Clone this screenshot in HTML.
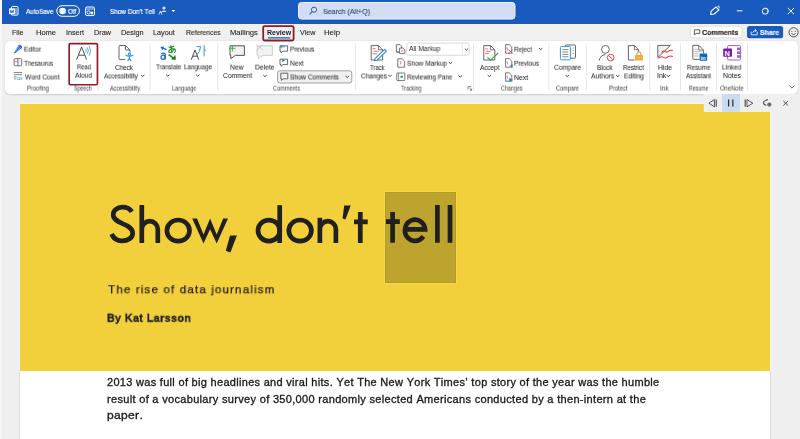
<!DOCTYPE html>
<html><head><meta charset="utf-8">
<style>
*{margin:0;padding:0;box-sizing:border-box}
html,body{width:800px;height:439px;overflow:hidden;background:#efefef;font-family:"Liberation Sans",sans-serif;color:#262626}
.t{position:absolute;white-space:nowrap;line-height:1;font-kerning:none;transform-origin:0 0;will-change:transform}
.b{position:absolute}
svg{position:absolute;overflow:visible}
#title{position:absolute;left:2px;top:0;width:798px;height:24px;background:#185abd}
#lstrip{position:absolute;left:0;top:0;width:2px;height:439px;background:#f7f7f7}
#ribbonbg{position:absolute;left:2px;top:24px;width:798px;height:70px;background:#f0f0f0}
#panel{position:absolute;left:5px;top:41px;width:793px;height:53px;background:#fff;border-radius:5px;box-shadow:0 0.6px 1.6px rgba(0,0,0,.14)}
#docbg{position:absolute;left:2px;top:94px;width:798px;height:345px;background:#efefef}
#page{position:absolute;left:20px;top:104px;width:750px;height:335px;background:#fff}
#yellow{position:absolute;left:20px;top:104px;width:750px;height:267px;background:#f2d03c}
</style></head><body>
<div id="lstrip"></div>
<div id="title"></div>
<div id="ribbonbg"></div>
<div id="docbg"></div>
<div class="b" style="left:19px;top:102px;width:752px;height:269px;background:#f1f3fb"></div>
<div class="b" style="left:19px;top:371px;width:1px;height:68px;background:#dcdcdc"></div>
<div class="b" style="left:770px;top:371px;width:1px;height:68px;background:#dcdcdc"></div>
<div id="page"></div>
<div id="yellow"></div>
<div id="panel"></div>
<div class="b" style="left:384.3px;top:191px;width:73px;height:93px;background:#f6d842"></div>
<div class="b" style="left:385.3px;top:192px;width:71px;height:91px;background:#bda42f;box-shadow:inset 0 0 0 0.8px #b19829"></div>
<svg width="800" height="439" viewBox="0 0 800 439" style="left:0;top:0">
<!-- ===== title bar ===== -->
<!-- word icon -->
<rect x="11.5" y="6.5" width="6.5" height="8.6" rx="1" fill="none" stroke="#fff" stroke-width="1"/>
<line x1="15" y1="9" x2="17" y2="9" stroke="#fff" stroke-width="0.8"/>
<line x1="15" y1="11" x2="17" y2="11" stroke="#fff" stroke-width="0.8"/>
<line x1="15" y1="13" x2="17" y2="13" stroke="#fff" stroke-width="0.8"/>
<rect x="9" y="8.2" width="6" height="6" rx="1" fill="#fff"/>
<path d="M10.2 9.8 L11.1 12.8 L12 10.6 L12.9 12.8 L13.8 9.8" fill="none" stroke="#185abd" stroke-width="0.9"/>
<!-- toggle -->
<rect x="56.8" y="5.7" width="22.6" height="10.6" rx="5.3" fill="none" stroke="#fff" stroke-width="1"/>
<circle cx="62.6" cy="11" r="3.3" fill="#fff"/>
<!-- save/sync icon -->
<rect x="85.5" y="7" width="9" height="8.6" rx="1.5" fill="none" stroke="#fff" stroke-width="1"/>
<line x1="85.5" y1="9" x2="94.5" y2="9" stroke="#fff" stroke-width="0.8"/>
<circle cx="88.6" cy="12.4" r="1.6" fill="none" stroke="#fff" stroke-width="0.9"/>
<circle cx="91.8" cy="13" r="1.4" fill="#fff"/>
<!-- person icon + caret -->
<circle cx="164" cy="8" r="1.6" fill="#dfe7f6"/>
<path d="M161.8 11.5 Q164 9.5 166.2 11.5 L166.2 12 L161.8 12 Z" fill="#dfe7f6"/>
<path d="M159 14.5 L160.5 11 L162 14.5 M159.4 12.3 L161.6 12.3" fill="none" stroke="#dfe7f6" stroke-width="0.9"/>
<path d="M171.4 9.9 L175.3 9.9 L173.35 12 Z" fill="#fff"/>
<!-- search box -->
<rect x="298.5" y="2.5" width="216.5" height="16.6" rx="3" fill="#d3ddf1" stroke="#eef2fa" stroke-width="1"/>
<circle cx="314" cy="9.7" r="2.6" fill="none" stroke="#3a5a93" stroke-width="1"/>
<line x1="312.2" y1="11.6" x2="309.6" y2="14.3" stroke="#3a5a93" stroke-width="1.1"/>
<!-- pen icon -->
<path d="M710.6 14.4 L711.2 11.2 L716 7 L719 9.8 L714.2 14 Z" fill="none" stroke="#fff" stroke-width="1.1" stroke-linejoin="round"/><path d="M717.4 6.6 L718.8 5.8 L719.4 8.2" fill="none" stroke="#fff" stroke-width="0.8"/>
<!-- minimize -->
<line x1="736.9" y1="10.8" x2="742.5" y2="10.8" stroke="#fff" stroke-width="1"/>
<!-- restore -->
<rect x="762.5" y="8.6" width="5.4" height="5.4" rx="2" fill="none" stroke="#fff" stroke-width="1"/><path d="M764.2 8 Q768.6 7.6 768.6 12.2" fill="none" stroke="#fff" stroke-width="0.6"/>
<!-- close -->
<path d="M787.8 8 L794 14.2 M794 8 L787.8 14.2" stroke="#fff" stroke-width="1"/>

<!-- ===== tabs row ===== -->
<rect x="263.2" y="26.1" width="30.4" height="14.4" rx="1.5" fill="none" stroke="#8d1c27" stroke-width="1.8"/>
<line x1="268.4" y1="37.9" x2="289.8" y2="37.9" stroke="#185abd" stroke-width="1.2" stroke-linecap="round"/>
<!-- comments button -->
<rect x="690.5" y="26.3" width="51.6" height="11.6" rx="2.5" fill="#fff" stroke="#dcdcdc" stroke-width="0.8"/>
<path d="M694.4 29.8 h5.4 v3.6 h-3.6 l-1.8 1.5 Z" fill="none" stroke="#333" stroke-width="0.8"/>
<!-- share button -->
<rect x="747" y="26" width="36.1" height="12.2" rx="2.5" fill="#185abd"/>
<path d="M751.2 31.6 v3.2 h6 v-3.2 M752.6 32.8 q0.8 -2.4 3.4 -2.4 M754.8 29.2 l1.6 1.3 l-1.6 1.3" fill="none" stroke="#fff" stroke-width="0.8"/>
<!-- smiley -->
<circle cx="793.6" cy="32.3" r="4.6" fill="none" stroke="#333" stroke-width="0.85"/>
<circle cx="791.9" cy="31.2" r="0.55" fill="#333"/>
<circle cx="795.3" cy="31.2" r="0.55" fill="#333"/>
<path d="M791.4 33.6 q2.2 1.9 4.4 0" fill="none" stroke="#333" stroke-width="0.8"/>

<!-- ===== ribbon ===== -->
<!-- separators -->
<g fill="#e0e0e0">
<rect x="67.8" y="43.5" width="0.8" height="47.2"/>
<rect x="97.8" y="43.5" width="0.8" height="47.2"/>
<rect x="149.6" y="43.5" width="0.8" height="47.2"/>
<rect x="217.4" y="43.5" width="0.8" height="47.2"/>
<rect x="355.3" y="43.5" width="0.8" height="47.2"/>
<rect x="473.2" y="43.5" width="0.8" height="47.2"/>
<rect x="548.5" y="43.5" width="0.8" height="47.2"/>
<rect x="585.8" y="43.5" width="0.8" height="47.2"/>
<rect x="649.4" y="43.5" width="0.8" height="47.2"/>
<rect x="680.2" y="43.5" width="0.8" height="47.2"/>
<rect x="716.2" y="43.5" width="0.8" height="47.2"/>
<rect x="747.2" y="43.5" width="0.8" height="47.2"/>
</g>
<!-- editor pen -->
<path d="M13.9 52.9 L18.4 45.6 Q19.4 44.2 20.5 45.1 L21.9 46.5 Q22.5 47.5 21.6 48.3 L14.9 53.2 Z" fill="#2c62d6"/>
<path d="M15.3 51.4 L19.2 45.9 M17.2 51.6 L20.6 47.2" stroke="#fff" stroke-width="0.45"/>
<!-- thesaurus book -->
<rect x="14.1" y="58.6" width="7.6" height="7.2" rx="1" fill="#f4f4f4" stroke="#555" stroke-width="0.8"/>
<line x1="17.9" y1="58.6" x2="17.9" y2="65.8" stroke="#555" stroke-width="0.8"/>
<line x1="14.8" y1="61.6" x2="17.2" y2="61.6" stroke="#e0505a" stroke-width="0.7"/>
<!-- word count -->
<g stroke="#555" stroke-width="0.7">
<line x1="13.8" y1="72.5" x2="22" y2="72.5"/>
<line x1="13.8" y1="74.6" x2="22" y2="74.6"/>
<line x1="13.8" y1="76.7" x2="16.5" y2="76.7"/>
<line x1="13.8" y1="78.8" x2="16.5" y2="78.8"/>
</g>
<text x="16.8" y="80.3" font-family="Liberation Sans" font-size="4.2" font-weight="700" fill="#2a8ee0" textLength="5.2" lengthAdjust="spacingAndGlyphs">123</text>
<!-- read aloud -->
<path d="M76.6 59.6 L81.6 47 L86.6 59.6 M78.6 55.2 L84.6 55.2" fill="none" stroke="#3a3a3a" stroke-width="0.9"/>
<g fill="none" stroke="#3a9be0" stroke-width="0.9">
<path d="M85.6 48.8 Q86.9 50.6 85.6 52.4"/>
<path d="M87.3 47.4 Q89.5 50.6 87.3 53.8"/>
<path d="M89.2 45.8 Q92.2 50.6 89.2 55.6"/>
</g>
<rect x="69.2" y="43.6" width="28.2" height="41.1" rx="1.2" fill="none" stroke="#8d1c27" stroke-width="1.6"/>
<!-- check accessibility -->
<path d="M125.6 45.5 L119.8 45.5 Q119 45.5 119 46.3 L119 58.7 Q119 59.5 119.8 59.5 L126 59.5 M130 50 L130 52.2 M125.6 45.5 L130 50" fill="#fff" stroke="#555" stroke-width="0.9"/>
<path d="M125.4 45.6 L125.4 49 Q125.4 50 126.4 50 L130 50" fill="none" stroke="#333" stroke-width="0.8"/>
<rect x="125" y="52.4" width="9" height="9" fill="#fff"/>
<g fill="none" stroke="#3e9ae0" stroke-width="1.2" stroke-linecap="round">
<circle cx="129.4" cy="54" r="1.1"/>
<path d="M125.9 55.4 Q129.4 56.8 132.9 55.4"/>
<path d="M129.4 56.2 V58.4 L127.9 60.6 M129.4 58.4 L130.9 60.6"/>
</g>
<path d="M141.05 74.90 L142.75 76.40 L144.45 74.90" fill="none" stroke="#333" stroke-width="0.9"/>
<!-- translate -->
<g fill="none" stroke="#1a6bd0" stroke-width="1.3">
<ellipse cx="163.1" cy="57.2" rx="2" ry="2.1"/>
<path d="M161 53.7 Q163.4 52.3 165.2 53.9 L165.2 59.6"/>
<path d="M166.6 49.6 L162.4 47.8"/>
</g>
<path d="M160.4 47 L164.2 46.6 L162.6 50.2 Z" fill="#1a6bd0"/>
<g fill="none" stroke="#1f8a2e" stroke-width="1.1">
<path d="M168.6 47.3 Q171.4 47.2 174 46.4"/>
<path d="M170.8 45.2 Q171 49.6 172.2 53"/>
<path d="M173.4 48.6 Q169 49.2 168.8 51.6 Q169 53.2 171 52.2 Q173.8 50.4 174.2 48.8 Q176.6 50.4 174.2 53"/>
</g>
<path d="M168.6 54.6 L173.6 58.2" stroke="#107c10" stroke-width="1.4"/>
<path d="M175.8 59.8 L171 59.4 L175.4 55 Z" fill="#107c10"/>
<path d="M166.10 74.70 L167.80 76.20 L169.50 74.70" fill="none" stroke="#333" stroke-width="0.9"/>
<!-- language -->
<path d="M191.2 59.8 L195 50 L198.8 59.8 M192.7 56.2 L197.3 56.2" fill="none" stroke="#3a3a3a" stroke-width="0.9"/>
<path d="M196.6 46.6 L200.6 46.6 Q200.4 52 196.2 55.4 M204.1 45.2 L204.1 56.4 M204.1 50.2 L206 50.2" fill="none" stroke="#3a96dd" stroke-width="1"/>
<path d="M196.10 74.70 L197.80 76.20 L199.50 74.70" fill="none" stroke="#333" stroke-width="0.9"/>
<!-- new comment -->
<path d="M230 45.8 L244.4 45.8 L244.4 55.4 L235.4 55.4 L230.8 58.6 L230.8 55.4 L230 55.4 Z" fill="#f1f1f1" stroke="#444" stroke-width="0.9" stroke-linejoin="round"/>
<path d="M232.4 45.2 L232.4 51.4 M229.3 48.3 L235.5 48.3" stroke="#3cb44a" stroke-width="1"/>
<!-- delete -->
<path d="M257.2 45.8 L272.4 45.8 L272.4 55.4 L263 55.4 L258.4 58.6 L258.4 55.4 L257.2 55.4 Z" fill="#f3f3f3" stroke="#c8c8c8" stroke-width="0.9" stroke-linejoin="round"/>
<path d="M256.4 44.2 L263.4 50.6 M263.4 44.2 L256.4 50.6" stroke="#c0c0c0" stroke-width="0.8"/>
<path d="M263.30 75.10 L265.00 76.60 L266.70 75.10" fill="none" stroke="#333" stroke-width="0.9"/>
<!-- previous / next comment -->
<path d="M280 45.8 L287.6 45.8 L287.6 51.2 L283 51.2 L281 52.8 L281 51.2 L280 51.2 Z" fill="none" stroke="#444" stroke-width="0.8"/>
<path d="M284.6 46.8 L280.4 46.8 M281.8 45.6 L280.4 46.8 L281.8 48" fill="none" stroke="#2b88d8" stroke-width="0.9"/>
<path d="M280 59.2 L287.6 59.2 L287.6 64.6 L283 64.6 L281 66.2 L281 64.6 L280 64.6 Z" fill="none" stroke="#444" stroke-width="0.8"/>
<path d="M282.2 58.4 L282.2 62.2 L285 60.3 Z" fill="#2b88d8"/>
<!-- show comments button -->
<rect x="277.6" y="70.8" width="74.2" height="12.2" rx="2.4" fill="#f0f0f0" stroke="#8a8a8a" stroke-width="0.8"/>
<path d="M280.8 73.2 L287.8 73.2 L287.8 78.8 L283.2 78.8 L281.6 80.4 L281.6 78.8 L280.8 78.8 Z" fill="none" stroke="#444" stroke-width="0.8"/>
<path d="M345.50 76.00 L347.20 77.50 L348.90 76.00" fill="none" stroke="#333" stroke-width="0.9"/>
<!-- track changes -->
<path d="M371.2 45.6 L378.4 45.6 L382.6 49.8 L382.6 60 L371.2 60 Z" fill="#fff" stroke="#555" stroke-width="0.9" stroke-linejoin="round"/>
<path d="M378.4 45.6 L378.4 49.8 L382.6 49.8" fill="none" stroke="#555" stroke-width="0.8"/>
<g stroke="#e8484f" stroke-width="0.8"><line x1="372.6" y1="48.6" x2="375.4" y2="48.6"/><line x1="373.6" y1="51.2" x2="378.6" y2="51.2"/><line x1="372.6" y1="53.8" x2="377.2" y2="53.8"/></g>
<path d="M374.6 60.8 L375.2 58.4 L384.6 49.4 L386.4 51.2 L377 60.2 Z" fill="#fff" stroke="#2b88d8" stroke-width="1.1" stroke-linejoin="round"/>
<path d="M388.30 75.00 L390.00 76.50 L391.70 75.00" fill="none" stroke="#333" stroke-width="0.9"/>
<!-- all markup icon -->
<path d="M396.4 44.6 L400 44.6 L401.6 46.2 L401.6 52 L396.4 52 Z" fill="#fff" stroke="#555" stroke-width="0.8"/>
<path d="M399.6 48 L403 48 L404.8 49.8 L404.8 53.6 L399.6 53.6 Z" fill="#fff" stroke="#555" stroke-width="0.8"/>
<line x1="396.8" y1="52.4" x2="399.4" y2="52.4" stroke="#2b88d8" stroke-width="1.1"/>
<line x1="401" y1="51" x2="403.4" y2="51" stroke="#e8484f" stroke-width="0.8"/>
<!-- all markup dropdown -->
<rect x="406.6" y="43.1" width="62.6" height="12.2" rx="2" fill="#fff" stroke="#d2d2d2" stroke-width="0.8"/>
<line x1="462.3" y1="43.4" x2="462.3" y2="55" stroke="#e3e3e3" stroke-width="0.8"/>
<path d="M464.9 48.7 L466.4 50.1 L467.9 48.7" fill="none" stroke="#333" stroke-width="0.9"/>
<!-- show markup -->
<path d="M397.8 58.8 L402.2 58.8 L404.6 61.2 L404.6 67.2 L397.8 67.2 Z" fill="#fff" stroke="#555" stroke-width="0.8" stroke-linejoin="round"/>
<line x1="400.8" y1="61.2" x2="400.8" y2="64.6" stroke="#e8484f" stroke-width="0.8"/>
<path d="M448.80 62.10 L450.50 63.60 L452.20 62.10" fill="none" stroke="#333" stroke-width="0.9"/>
<!-- reviewing pane -->
<rect x="396.8" y="73" width="8" height="7.6" rx="0.8" fill="#fff" stroke="#555" stroke-width="0.8"/>
<line x1="398.6" y1="73" x2="398.6" y2="80.6" stroke="#555" stroke-width="0.6"/>
<rect x="400.4" y="75.8" width="2.4" height="2" fill="#2b88d8"/>
<path d="M458.50 75.70 L460.20 77.20 L461.90 75.70" fill="none" stroke="#333" stroke-width="0.9"/>
<!-- tracking launcher -->
<path d="M468 86.6 L471.2 86.6 M468 86.6 L468 89.6 M469.4 88 L471.6 90.2 M471.6 88.6 L471.6 90.2 L470 90.2" fill="none" stroke="#555" stroke-width="0.7"/>
<!-- accept -->
<path d="M483.8 45.6 L490.6 45.6 L494.8 49.8 L494.8 60 L483.8 60 Z" fill="#fff" stroke="#555" stroke-width="0.9" stroke-linejoin="round"/>
<path d="M490.6 45.6 L490.6 49.8 L494.8 49.8" fill="none" stroke="#555" stroke-width="0.8"/>
<g stroke="#e8484f" stroke-width="0.8"><line x1="485.2" y1="49" x2="488" y2="49"/><line x1="486" y1="51.4" x2="490.6" y2="51.4"/><line x1="485.2" y1="53.6" x2="489" y2="53.6"/></g>
<path d="M487.4 57 L490.4 60.4 L498.2 53" fill="none" stroke="#3aa845" stroke-width="1.1"/>
<path d="M487.70 75.10 L489.40 76.60 L491.10 75.10" fill="none" stroke="#333" stroke-width="0.9"/>
<!-- reject/prev/next change -->
<g fill="#fff" stroke="#555" stroke-width="0.8" stroke-linejoin="round">
<path d="M505.6 44.6 L509.2 44.6 L511.8 47.2 L511.8 53.2 L505.6 53.2 Z"/>
<path d="M505.6 58.6 L509.2 58.6 L511.8 61.2 L511.8 67.2 L505.6 67.2 Z"/>
<path d="M505.6 72.8 L509.2 72.8 L511.8 75.4 L511.8 81.2 L505.6 81.2 Z"/>
</g>
<g stroke="#e8484f" stroke-width="0.7"><line x1="507" y1="47.4" x2="507.6" y2="50.4"/><line x1="507" y1="61.4" x2="507.6" y2="64.4"/><line x1="507" y1="75.6" x2="507.6" y2="78.6"/></g>
<path d="M508.6 49.6 L512.6 53.6 M512.6 49.6 L508.6 53.6" stroke="#e8484f" stroke-width="0.9"/>
<path d="M512.6 64 L509.6 66 L512.6 68 Z" fill="#2b88d8"/>
<path d="M509.2 77.8 L513 80 L509.2 82 Z" fill="#2b88d8"/>
<path d="M538.90 48.10 L540.60 49.60 L542.30 48.10" fill="none" stroke="#333" stroke-width="0.9"/>
<!-- compare -->
<rect x="565.3" y="45" width="10.2" height="13.2" rx="0.8" fill="#fff" stroke="#555" stroke-width="0.9"/>
<g stroke="#555" stroke-width="0.6"><line x1="572.6" y1="48" x2="574" y2="48"/><line x1="572.6" y1="50.6" x2="574" y2="50.6"/><line x1="572.6" y1="53.2" x2="574" y2="53.2"/></g>
<rect x="560.4" y="46.4" width="10" height="13.4" rx="1" fill="#fff" stroke="#3a96dd" stroke-width="1"/>
<g stroke="#555" stroke-width="0.7"><line x1="562.4" y1="49.6" x2="568.4" y2="49.6"/><line x1="562.4" y1="52" x2="568.4" y2="52"/><line x1="562.4" y1="54.4" x2="568.4" y2="54.4"/><line x1="562.4" y1="56.8" x2="568.4" y2="56.8"/></g>
<path d="M565.50 75.10 L567.20 76.60 L568.90 75.10" fill="none" stroke="#333" stroke-width="0.9"/>
<!-- block authors -->
<circle cx="605.4" cy="49.4" r="3.9" fill="none" stroke="#555" stroke-width="0.9"/>
<path d="M599.2 60.6 Q600.2 55 605.4 54.6" fill="none" stroke="#555" stroke-width="0.9"/>
<circle cx="610.7" cy="57.6" r="3.4" fill="#fff" stroke="#e8484f" stroke-width="1"/>
<line x1="608.4" y1="55.3" x2="613" y2="59.9" stroke="#e8484f" stroke-width="1"/>
<path d="M616.10 75.10 L617.80 76.60 L619.50 75.10" fill="none" stroke="#333" stroke-width="0.9"/>
<!-- restrict editing -->
<path d="M628.4 45.6 L634.4 45.6 L638.4 49.6 L638.4 52 M634.6 60 L628.4 60 L628.4 45.6" fill="#fff" stroke="#555" stroke-width="0.9" stroke-linejoin="round"/>
<path d="M634.4 45.6 L634.4 49.6 L638.4 49.6" fill="none" stroke="#555" stroke-width="0.8"/>
<path d="M637 55 L637 53.4 Q637 51.8 638.9 51.8 Q640.8 51.8 640.8 53.4 L640.8 55" fill="none" stroke="#d98a1f" stroke-width="0.9"/>
<rect x="635" y="55" width="8" height="5.6" rx="0.6" fill="#f2a93b"/>
<line x1="635.4" y1="57.4" x2="642.6" y2="57.4" stroke="#fbd28a" stroke-width="0.5"/>
<!-- hide ink -->
<path d="M657.8 57.6 L657.8 45.4 L670.4 45.4 Z" fill="#f1f1f1"/>
<path d="M657.8 57.6 L657.8 45.4 L670.4 45.4 L657.8 57.6" fill="none" stroke="#555" stroke-width="0.9"/>
<path d="M661.6 52.8 Q663.2 50 665.2 51.6 Q667 53 668.8 51 Q670.4 49.8 672.8 50.4" fill="none" stroke="#e23b3b" stroke-width="1.1"/>
<path d="M658.4 58.4 Q661.2 55.6 663.6 57.4 Q665.8 58.8 668 56.6 Q670 55.4 672.8 56.4" fill="none" stroke="#e23b3b" stroke-width="1.1"/>
<path d="M666.70 75.10 L668.40 76.60 L670.10 75.10" fill="none" stroke="#333" stroke-width="0.9"/>
<!-- resume assistant -->
<path d="M692.8 45.4 L698.8 45.4 L703.4 50 L703.4 53.4 M699.4 59.4 L693.6 59.4 Q692.8 59.4 692.8 58.6 L692.8 45.4" fill="#fff" stroke="#555" stroke-width="0.9" stroke-linejoin="round"/>
<path d="M698.8 45.4 L698.8 50 L703.4 50" fill="none" stroke="#555" stroke-width="0.8"/>
<g stroke="#888" stroke-width="0.6"><line x1="694.4" y1="49.4" x2="697.6" y2="49.4"/><line x1="694.4" y1="51.6" x2="701.6" y2="51.6"/><line x1="694.4" y1="53.8" x2="698.6" y2="53.8"/><line x1="694.4" y1="56" x2="698.6" y2="56"/></g>
<rect x="699.6" y="53.6" width="7.6" height="7.2" rx="0.8" fill="#0a66c2"/>
<text x="700.7" y="59.9" font-family="Liberation Sans" font-size="5.6" font-weight="700" fill="#fff">in</text>
<!-- onenote -->
<rect x="727.6" y="45.6" width="13" height="14.4" rx="1.2" fill="#fff" stroke="#a35ad6" stroke-width="1"/>
<g fill="#a35ad6"><rect x="737" y="47.6" width="3.6" height="2.6"/><rect x="737" y="51.4" width="3.6" height="2.6"/><rect x="737" y="55.2" width="3.6" height="2.6"/></g>
<rect x="723.2" y="48.6" width="8.8" height="8.2" rx="0.8" fill="#7719aa"/>
<text x="724.5" y="55.5" font-family="Liberation Sans" font-size="7.4" font-weight="700" fill="#fff">N</text>
<!-- collapse chevron -->
<path d="M789.4 85.6 L791.9 88 L794.4 85.6" fill="none" stroke="#444" stroke-width="0.8"/>

<!-- ===== read aloud toolbar ===== -->
<rect x="703.8" y="94" width="96.2" height="18" fill="#efefef"/>
<rect x="722" y="94" width="18" height="17.8" fill="#ccdcf0"/>
<path d="M714.4 99.6 L708.9 103.2 L714.4 106.8 Z" fill="none" stroke="#444" stroke-width="0.9" stroke-linejoin="round"/>
<path d="M716.2 99.6 L716.2 106.8" stroke="#444" stroke-width="1.1"/>
<path d="M728.6 99.6 L728.6 106.6 M732.8 99.6 L732.8 106.6" stroke="#333" stroke-width="1.3"/>
<path d="M745.2 99.6 L745.2 106.8" stroke="#444" stroke-width="1.1"/>
<path d="M747 99.6 L752.8 103.2 L747 106.8 Z" fill="none" stroke="#444" stroke-width="0.9" stroke-linejoin="round"/>
<path d="M766.6 100.2 Q763.4 100.8 763.5 102.9 Q763.6 104.9 766.4 105.2" fill="none" stroke="#555" stroke-width="1.1"/><circle cx="767" cy="99.7" r="0.8" fill="#333"/>
<circle cx="769.3" cy="104.6" r="2.1" fill="#6a6a6a"/>
<path d="M783.3 100.9 L788 105.5 M788 100.9 L783.3 105.5" stroke="#3a3a3a" stroke-width="0.9"/>
</svg>
<svg width="800" height="439" viewBox="0 0 800 439" style="left:0;top:0">
<defs><clipPath id="wclip"><rect x="150" y="218.4" width="90" height="25.1"/></clipPath></defs>
<g fill="none" stroke="#202020" stroke-width="4.7" stroke-linecap="butt">
<!-- S -->
<path d="M131.8 211.8 C130 208.8 126.4 207.2 122.4 207.2 C117.2 207.2 113.2 210.4 113.2 214.6 C113.2 219.6 118 221.6 122.5 223.6 C127.8 225.8 132.7 228 132.7 233.2 C132.7 237.8 128 240.9 122 240.9 C117.2 240.9 113.4 238.2 111.6 234"/>
<!-- h -->
<path d="M141.8 243 V205 M141.8 229.2 A8 8 0 0 1 157.8 229.2 V243"/>
<!-- o -->
<ellipse cx="178.2" cy="230.6" rx="11.3" ry="10.6"/>
<!-- w -->

<!-- d -->
<ellipse cx="268.9" cy="230.6" rx="10.9" ry="10.5"/>
<path d="M279.7 243 V205.2"/>
<!-- o -->
<ellipse cx="300.1" cy="230.6" rx="11.3" ry="10.6"/>
<!-- n -->
<path d="M319.9 243 V217.8 M319.9 229.2 A8 8 0 0 1 335.9 229.2 V243"/>
<!-- t -->
<path d="M360.3 212 V243 M354 221.8 H367.7"/>
<!-- t -->
<path d="M392.6 212 V242.8 M386 221.6 H399.8"/>
<!-- e -->
<path d="M404.9 229.4 H425.1 A10.1 10.6 0 1 0 423.3 236.4"/>
<!-- l l -->
<path d="M437.4 205 V242.8 M450 205 V242.8"/>
</g>
<g fill="#202020">
<path d="M192.2 218.6 L197 218.6 L203.5 234.4 L210.1 218.6 L216.7 234.4 L223.2 218.6 L228 218.6 L216.7 243.4 L210.1 229.2 L203.5 243.4 Z"/>
<path d="M230 235.4 L236.9 235.4 L230.4 252.4 L225.8 250.8 Z"/>
<path d="M344.2 205.6 L350.8 205.6 L345.4 219.4 L342.6 218.6 Z"/>
</g>
</svg>

<span class="t" style="left:26.39px;top:8px;font-size:6.9px;color:#ffffff;transform:translateY(0.90px) scaleX(0.9223);-webkit-text-stroke:0.2px #fff;">AutoSave</span>
<span class="t" style="left:67.71px;top:8px;font-size:6.9px;color:#ffffff;transform:translateY(0.90px) scaleX(0.9005);-webkit-text-stroke:0.2px #fff;">Off</span>
<span class="t" style="left:110.11px;top:8px;font-size:7.2px;color:#ffffff;transform:scaleX(0.8909);-webkit-text-stroke:0.2px #fff;">Show Don’t Tell</span>
<span class="t" style="left:323.38px;top:8px;font-size:7.6px;color:#2d4d88;transform:scaleX(0.9324);-webkit-text-stroke:0.15px #2d4d88;">Search (Alt+Q)</span>
<span class="t" style="left:11.81px;top:29px;font-size:7.0px;color:#1c1c1c;transform:scaleX(1.0198);-webkit-text-stroke:0.08px #1c1c1c;">File</span>
<span class="t" style="left:36.28px;top:29px;font-size:7.0px;color:#1c1c1c;transform:scaleX(1.0738);-webkit-text-stroke:0.08px #1c1c1c;">Home</span>
<span class="t" style="left:66.24px;top:29px;font-size:7.0px;color:#1c1c1c;transform:scaleX(1.0292);-webkit-text-stroke:0.08px #1c1c1c;">Insert</span>
<span class="t" style="left:94.20px;top:29px;font-size:7.0px;color:#1c1c1c;transform:scaleX(1.0458);-webkit-text-stroke:0.08px #1c1c1c;">Draw</span>
<span class="t" style="left:121.00px;top:29px;font-size:7.0px;color:#1c1c1c;transform:scaleX(1.0404);-webkit-text-stroke:0.08px #1c1c1c;">Design</span>
<span class="t" style="left:153.20px;top:29px;font-size:7.0px;color:#1c1c1c;transform:scaleX(1.0396);-webkit-text-stroke:0.08px #1c1c1c;">Layout</span>
<span class="t" style="left:185.64px;top:29px;font-size:7.0px;color:#1c1c1c;transform:scaleX(0.9666);-webkit-text-stroke:0.08px #1c1c1c;">References</span>
<span class="t" style="left:229.78px;top:29px;font-size:7.0px;color:#1c1c1c;transform:scaleX(1.0866);-webkit-text-stroke:0.08px #1c1c1c;">Mailings</span>
<span class="t" style="left:299.97px;top:29px;font-size:7.0px;color:#1c1c1c;transform:scaleX(1.0093);-webkit-text-stroke:0.08px #1c1c1c;">View</span>
<span class="t" style="left:324.36px;top:29px;font-size:7.0px;color:#1c1c1c;transform:scaleX(1.1088);-webkit-text-stroke:0.08px #1c1c1c;">Help</span>
<span class="t" style="left:266.84px;top:29px;font-size:7.0px;font-weight:700;color:#1c1c1c;transform:scaleX(0.9886);">Review</span>
<span class="t" style="left:701.91px;top:28px;font-size:7.2px;font-weight:700;color:#141414;transform:translateY(0.90px) scaleX(0.9750);-webkit-text-stroke:0.12px #141414;">Comments</span>
<span class="t" style="left:759.50px;top:28px;font-size:7.2px;font-weight:700;color:#ffffff;transform:translateY(0.90px) scaleX(0.9562);-webkit-text-stroke:0.12px #fff;">Share</span>
<span class="t" style="left:24.06px;top:46px;font-size:6.8px;color:#1f1f1f;transform:translateY(0.60px) scaleX(0.9595);-webkit-text-stroke:0.04px #262626;">Editor</span>
<span class="t" style="left:24.46px;top:60px;font-size:6.8px;color:#1f1f1f;transform:translateY(0.70px) scaleX(0.9045);-webkit-text-stroke:0.04px #262626;">Thesaurus</span>
<span class="t" style="left:24.57px;top:74px;font-size:6.8px;color:#1f1f1f;transform:translateY(0.50px) scaleX(0.9502);-webkit-text-stroke:0.04px #262626;">Word Count</span>
<span class="t" style="left:26.52px;top:85px;font-size:6.5px;color:#3a3a3a;transform:translateY(0.60px) scaleX(0.9029);">Proofing</span>
<span class="t" style="left:76.72px;top:64px;font-size:6.8px;color:#1f1f1f;transform:translateY(0.30px) scaleX(0.8519);-webkit-text-stroke:0.04px #262626;">Read</span>
<span class="t" style="left:75.09px;top:72px;font-size:6.8px;color:#1f1f1f;transform:translateY(0.70px) scaleX(0.9858);-webkit-text-stroke:0.04px #262626;">Aloud</span>
<span class="t" style="left:74.26px;top:85px;font-size:6.5px;color:#3a3a3a;transform:translateY(0.60px) scaleX(0.7971);">Speech</span>
<span class="t" style="left:115.18px;top:65px;font-size:6.8px;color:#1f1f1f;transform:scaleX(0.9293);-webkit-text-stroke:0.04px #262626;">Check</span>
<span class="t" style="left:104.39px;top:73px;font-size:6.8px;color:#1f1f1f;transform:translateY(0.40px) scaleX(0.9161);-webkit-text-stroke:0.04px #262626;">Accessibility</span>
<span class="t" style="left:109.59px;top:85px;font-size:6.5px;color:#3a3a3a;transform:translateY(0.60px) scaleX(0.8453);">Accessibility</span>
<span class="t" style="left:155.86px;top:64px;font-size:6.8px;color:#1f1f1f;transform:translateY(0.30px) scaleX(0.8892);-webkit-text-stroke:0.04px #262626;">Translate</span>
<span class="t" style="left:183.88px;top:64px;font-size:6.8px;color:#1f1f1f;transform:translateY(0.30px) scaleX(0.9287);-webkit-text-stroke:0.04px #262626;">Language</span>
<span class="t" style="left:171.75px;top:85px;font-size:6.5px;color:#3a3a3a;transform:translateY(0.60px) scaleX(0.8399);">Language</span>
<span class="t" style="left:230.44px;top:64px;font-size:6.8px;color:#1f1f1f;transform:translateY(0.60px) scaleX(0.9952);-webkit-text-stroke:0.04px #262626;">New</span>
<span class="t" style="left:222.56px;top:73px;font-size:6.8px;color:#1f1f1f;transform:scaleX(0.9870);-webkit-text-stroke:0.04px #262626;">Comment</span>
<span class="t" style="left:255.45px;top:64px;font-size:6.8px;color:#1f1f1f;transform:translateY(0.60px) scaleX(0.9949);-webkit-text-stroke:0.04px #262626;">Delete</span>
<span class="t" style="left:289.89px;top:46px;font-size:6.8px;color:#1f1f1f;transform:translateY(0.60px) scaleX(0.9200);-webkit-text-stroke:0.04px #262626;">Previous</span>
<span class="t" style="left:289.85px;top:60px;font-size:6.8px;color:#1f1f1f;transform:translateY(0.70px) scaleX(0.9795);-webkit-text-stroke:0.04px #262626;">Next</span>
<span class="t" style="left:290.11px;top:74px;font-size:6.8px;color:#1f1f1f;transform:translateY(0.50px) scaleX(0.9450);-webkit-text-stroke:0.04px #262626;">Show Comments</span>
<span class="t" style="left:273.22px;top:85px;font-size:6.5px;color:#3a3a3a;transform:translateY(0.60px) scaleX(0.8587);">Comments</span>
<span class="t" style="left:369.87px;top:65px;font-size:6.8px;color:#1f1f1f;transform:scaleX(0.8483);-webkit-text-stroke:0.04px #262626;">Track</span>
<span class="t" style="left:361.17px;top:73px;font-size:6.8px;color:#1f1f1f;transform:translateY(0.40px) scaleX(0.9576);-webkit-text-stroke:0.04px #262626;">Changes</span>
<span class="t" style="left:408.69px;top:46px;font-size:6.8px;color:#262626;transform:scaleX(0.9805);">All Markup</span>
<span class="t" style="left:407.10px;top:60px;font-size:6.8px;color:#1f1f1f;transform:translateY(0.70px) scaleX(0.9639);-webkit-text-stroke:0.04px #262626;">Show Markup</span>
<span class="t" style="left:406.88px;top:74px;font-size:6.8px;color:#1f1f1f;transform:translateY(0.50px) scaleX(0.9238);-webkit-text-stroke:0.04px #262626;">Reviewing Pane</span>
<span class="t" style="left:400.78px;top:85px;font-size:6.5px;color:#3a3a3a;transform:translateY(0.60px) scaleX(0.8210);">Tracking</span>
<span class="t" style="left:479.99px;top:65px;font-size:6.8px;color:#1f1f1f;transform:scaleX(0.9312);-webkit-text-stroke:0.04px #262626;">Accept</span>
<span class="t" style="left:514.18px;top:46px;font-size:6.8px;color:#1f1f1f;transform:translateY(0.80px) scaleX(0.9268);-webkit-text-stroke:0.04px #262626;">Reject</span>
<span class="t" style="left:514.17px;top:60px;font-size:6.8px;color:#1f1f1f;transform:translateY(0.70px) scaleX(0.9512);-webkit-text-stroke:0.04px #262626;">Previous</span>
<span class="t" style="left:514.14px;top:74px;font-size:6.8px;color:#1f1f1f;transform:translateY(0.50px) scaleX(1.0094);-webkit-text-stroke:0.04px #262626;">Next</span>
<span class="t" style="left:500.63px;top:85px;font-size:6.5px;color:#3a3a3a;transform:translateY(0.60px) scaleX(0.8289);">Changes</span>
<span class="t" style="left:554.17px;top:64px;font-size:6.8px;color:#1f1f1f;transform:translateY(0.80px) scaleX(0.9663);-webkit-text-stroke:0.04px #262626;">Compare</span>
<span class="t" style="left:555.92px;top:85px;font-size:6.5px;color:#3a3a3a;transform:translateY(0.60px) scaleX(0.8578);">Compare</span>
<span class="t" style="left:597.48px;top:65px;font-size:6.8px;color:#1f1f1f;transform:scaleX(0.9328);-webkit-text-stroke:0.04px #262626;">Block</span>
<span class="t" style="left:591.49px;top:73px;font-size:6.8px;color:#1f1f1f;transform:translateY(0.40px) scaleX(0.9924);-webkit-text-stroke:0.04px #262626;">Authors</span>
<span class="t" style="left:623.20px;top:65px;font-size:6.8px;color:#1f1f1f;transform:scaleX(0.9002);-webkit-text-stroke:0.04px #262626;">Restrict</span>
<span class="t" style="left:623.77px;top:73px;font-size:6.8px;color:#1f1f1f;transform:translateY(0.40px) scaleX(0.9548);-webkit-text-stroke:0.04px #262626;">Editing</span>
<span class="t" style="left:608.52px;top:85px;font-size:6.5px;color:#3a3a3a;transform:translateY(0.60px) scaleX(0.8995);">Protect</span>
<span class="t" style="left:657.95px;top:65px;font-size:6.8px;color:#1f1f1f;transform:scaleX(0.9905);-webkit-text-stroke:0.04px #262626;">Hide</span>
<span class="t" style="left:657.15px;top:73px;font-size:6.8px;color:#1f1f1f;transform:translateY(0.40px) scaleX(1.0292);-webkit-text-stroke:0.04px #262626;">Ink</span>
<span class="t" style="left:660.43px;top:85px;font-size:6.5px;color:#3a3a3a;transform:translateY(0.60px) scaleX(0.9529);">Ink</span>
<span class="t" style="left:686.58px;top:64px;font-size:6.8px;color:#1f1f1f;transform:translateY(0.80px) scaleX(0.9321);-webkit-text-stroke:0.04px #262626;">Resume</span>
<span class="t" style="left:686.09px;top:73px;font-size:6.8px;color:#1f1f1f;transform:translateY(0.20px) scaleX(0.9046);-webkit-text-stroke:0.04px #262626;">Assistant</span>
<span class="t" style="left:688.57px;top:85px;font-size:6.5px;color:#3a3a3a;transform:translateY(0.60px) scaleX(0.8041);">Resume</span>
<span class="t" style="left:722.46px;top:64px;font-size:6.8px;color:#1f1f1f;transform:translateY(0.60px) scaleX(0.9610);-webkit-text-stroke:0.04px #262626;">Linked</span>
<span class="t" style="left:722.93px;top:72px;font-size:6.8px;color:#1f1f1f;transform:translateY(0.90px) scaleX(1.0141);-webkit-text-stroke:0.04px #262626;">Notes</span>
<span class="t" style="left:720.22px;top:85px;font-size:6.5px;color:#3a3a3a;transform:translateY(0.60px) scaleX(0.9009);">OneNote</span>
<span class="t" style="left:107.74px;top:284px;font-size:11.8px;color:#1a1a1a;letter-spacing:1.2px;transform:translateY(0.25px) scaleX(0.9767);-webkit-text-stroke:0.25px #1a1a1a;">The rise of data journalism</span>
<span class="t" style="left:107.29px;top:311px;font-size:11.6px;font-weight:700;color:#1a1a1a;letter-spacing:0.5px;transform:translateY(0.80px) scaleX(0.9157);-webkit-text-stroke:0.35px #1a1a1a;">By Kat Larsson</span>
<span class="t" style="left:107.45px;top:377px;font-size:10.9px;color:#1a1a1a;letter-spacing:0.3px;transform:translateY(0.40px) scaleX(1.0096);-webkit-text-stroke:0.32px #1a1a1a;">2013 was full of big headlines and viral hits. Yet The New York Times’ top story of the year was the humble</span>
<span class="t" style="left:107.27px;top:393px;font-size:10.9px;color:#1a1a1a;letter-spacing:0.3px;transform:translateY(0.60px) scaleX(1.0136);-webkit-text-stroke:0.32px #1a1a1a;">result of a vocabulary survey of 350,000 randomly selected Americans conducted by a then-intern at the</span>
<span class="t" style="left:107.22px;top:409px;font-size:10.9px;color:#1a1a1a;letter-spacing:0.3px;transform:translateY(0.60px) scaleX(1.1039);-webkit-text-stroke:0.32px #1a1a1a;">paper.</span>
</body></html>
